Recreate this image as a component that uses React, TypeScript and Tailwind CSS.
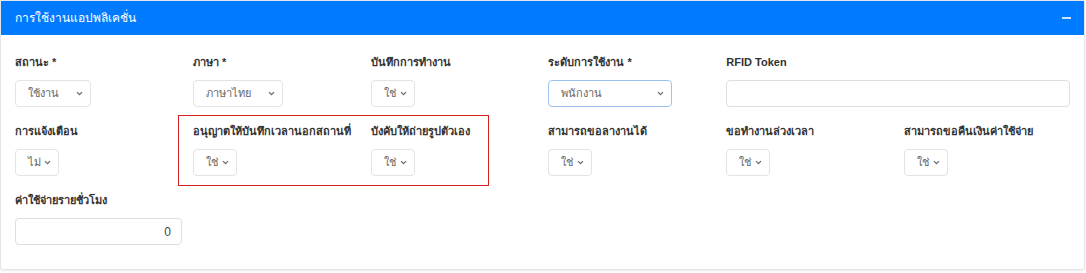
import React from "react";

type Field = {
  label: string;
  value?: string;
  width: string;
  kind?: "select" | "input";
  span?: string;
  align?: string;
};

const rows: Field[] = [
  { label: "สถานะ *", value: "ใช้งาน", width: "w-[76px]" },
  { label: "ภาษา *", value: "ภาษาไทย", width: "w-[90px]" },
  { label: "บันทึกการทำงาน", value: "ใช่", width: "w-[44px]" },
  { label: "ระดับการใช้งาน *", value: "พนักงาน", width: "w-[124px]" },
  { label: "RFID Token", width: "w-full", kind: "input", span: "col-span-2" },
  { label: "การแจ้งเตือน", value: "ไม่", width: "w-[44px]" },
  { label: "อนุญาตให้บันทึกเวลานอกสถานที่", value: "ใช่", width: "w-[44px]" },
  { label: "บังคับให้ถ่ายรูปตัวเอง", value: "ใช่", width: "w-[44px]" },
  { label: "สามารถขอลางานได้", value: "ใช่", width: "w-[44px]" },
  { label: "ขอทำงานล่วงเวลา", value: "ใช่", width: "w-[44px]" },
  { label: "สามารถขอคืนเงินค่าใช้จ่าย", value: "ใช่", width: "w-[44px]" },
  { label: "ค่าใช้จ่ายรายชั่วโมง", value: "0", width: "w-[167px]", kind: "input", align: "justify-end" },
];

const Chevron = () => (
  <svg width="7" height="5" viewBox="0 0 7 5" className="shrink-0">
    <path d="M1 1.2l2.5 2.5 2.5-2.5" fill="none" stroke="#666" strokeWidth="1.2" />
  </svg>
);

const Control = ({ f }: { f: Field }) => {
  if (f.kind === "input") {
    return (
      <div
        className={`${f.width} h-[27px] flex items-center ${f.align ?? ""} px-[10px] bg-white border border-[#dcdfe3] rounded-[4px] text-[12px] text-[#444]`}
      >
        {f.value}
      </div>
    );
  }
  const focused = f.label.startsWith("ระดับ");
  return (
    <div
      className={`${f.width} h-[27px] flex items-center justify-between pl-[12px] pr-[7px] bg-white border ${
        focused ? "border-[#9cc3f0]" : "border-[#e1e3e6]"
      } rounded-[4px] text-[11px] text-[#666]`}
    >
      <span>{f.value}</span>
      <Chevron />
    </div>
  );
};

const App = () => {
  return (
    <div
      className="w-[1086px] h-[273px] bg-white"
      style={{ fontFamily: '"Liberation Sans", "Noto Sans", sans-serif' }}
    >
      <div className="relative w-[1085px] border border-[#e2e4e7] rounded-[3px] shadow-[0_1px_2px_rgba(0,0,0,0.08)] bg-white">
        <div className="h-[34px] bg-[#007bff] flex items-center justify-between pl-[14px] pr-[13px]">
          <span className="text-white text-[12px]">การใช้งานแอปพลิเคชั่น</span>
          <span className="w-[9px] h-[2px] bg-[#cfe3ff]" />
        </div>
        <div className="grid grid-cols-6 gap-x-[12px] gap-y-[16px] px-[14px] pt-[19px] pb-[24px]">
          {rows.map((f, i) => (
            <div key={i} className={f.span ?? ""}>
              <div className="h-4 leading-4 mb-[10px] text-[11px] font-bold text-[#333] whitespace-nowrap">
                {f.label}
              </div>
              <Control f={f} />
            </div>
          ))}
        </div>
        <div className="absolute left-[177px] top-[114px] w-[311px] h-[71px] border-[1.5px] border-[#d81f1f] pointer-events-none" />
      </div>
    </div>
  );
};

export default App;
